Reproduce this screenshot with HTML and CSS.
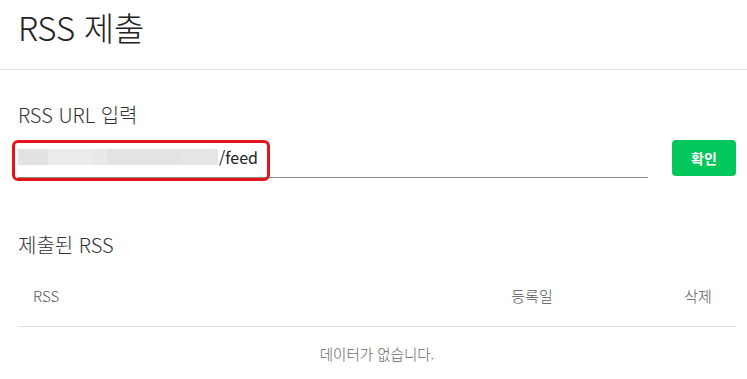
FILE: index.html
```html
<!DOCTYPE html>
<html lang="ko">
<head>
    <meta charset="UTF-8">
    <meta name="viewport" content="width=device-width, initial-scale=1.0">
    <title>RSS 제출</title>
    <link rel="stylesheet" href="styles.css">
</head>
<body>
    <div class="page-header">
        <h1>RSS 제출</h1>
    </div>
    <div class="content">
        <h2 class="section-title">RSS URL 입력</h2>
        <div class="url-row">
            <div class="url-field">
                <div class="url-value">
                    <span class="blur b1"></span><span class="blur b2"></span><span class="blur b3"></span><span class="blur b4"></span><span class="blur b5"></span><span class="feed">/feed</span>
                </div>
                <div class="highlight"></div>
            </div>
            <button class="confirm-btn">확인</button>
        </div>

        <h2 class="section-title list-title">제출된 RSS</h2>
        <div class="rss-table">
            <div class="table-head">
                <div class="col-rss">RSS</div>
                <div class="col-date">등록일</div>
                <div class="col-del">삭제</div>
            </div>
            <div class="empty">데이터가 없습니다.</div>
        </div>
    </div>
</body>
</html>
```

FILE: styles.css
```css
body {
    margin: 0;
    font-family: "Noto Sans CJK KR", "Noto Sans", sans-serif;
    color: #222;
    background: #fff;
}
.page-header {
    height: 69px;
    border-bottom: 1px solid #e1e1e1;
    padding-left: 18px;
}
.page-header h1 {
    margin: 0;
    padding-top: 4px;
    font-size: 33px;
    font-weight: 300;
    line-height: 46px;
    letter-spacing: -0.2px;
}
.content {
    padding: 0 11px 0 18px;
}
.section-title {
    margin: 0;
    font-size: 20px;
    font-weight: 300;
    line-height: 28px;
    color: #333;
}
.content > .section-title:first-child {
    padding-top: 31px;
}
.url-row {
    display: flex;
    align-items: flex-start;
    margin-top: 11px;
}
.url-field {
    position: relative;
    width: 630px;
    height: 37px;
    border-bottom: 1px solid #888;
}
.url-value {
    display: flex;
    align-items: center;
    height: 30px;
    padding-top: 2px;
    font-size: 16px;
}
.blur {
    display: inline-block;
    height: 16px;
    background: #e4e4e4;
}
.b1 { width: 30px; background: #e2e2e2; }
.b2 { width: 45px; background: #ececec; }
.b3 { width: 14px; background: #e9e9e9; }
.b4 { width: 75px; background: #e3e3e3; }
.b5 { width: 36px; background: #e6e6e6; }
.feed {
    color: #222;
    margin-left: 1px;
}
.highlight {
    position: absolute;
    left: -6px;
    top: 0;
    width: 252px;
    height: 35px;
    border: 3px solid #e3141a;
    border-radius: 6px;
}
.confirm-btn {
    margin-left: 24px;
    width: 64px;
    height: 36px;
    border: none;
    border-radius: 4px;
    background: #03c75a;
    color: #fff;
    font-family: inherit;
    font-size: 14px;
    font-weight: 700;
    cursor: pointer;
}
.list-title {
    margin-top: 53px;
}
.rss-table {
    margin-top: 5px;
}
.table-head {
    display: grid;
    grid-template-columns: 1fr 256px 76px;
    height: 62px;
    align-items: center;
    border-bottom: 1px solid #e1e1e1;
    font-size: 15px;
    font-weight: 300;
    color: #555;
}
.col-rss {
    padding-left: 15px;
}
.col-date,
.col-del {
    text-align: center;
}
.empty {
    text-align: center;
    font-size: 14.5px;
    font-weight: 300;
    color: #666;
    line-height: 54px;
}
```
